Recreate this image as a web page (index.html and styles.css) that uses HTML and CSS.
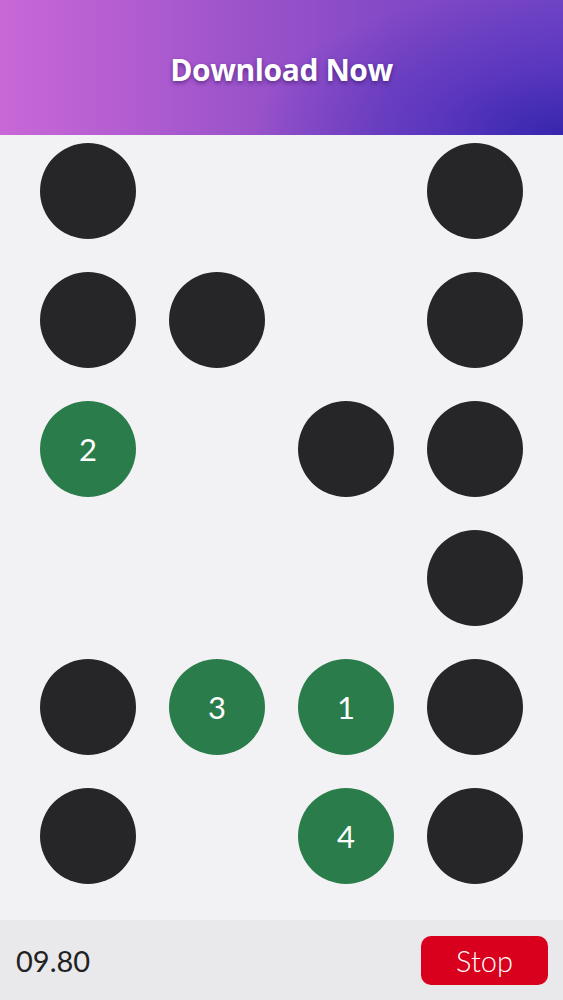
FILE: index.html
```html
<!doctype html>
<html>

<head>
    <meta charset="UTF-8">
    <title>Dots</title>
    <link rel="stylesheet" href="styles.css">
</head>

<body>
    <div class="banner">
        <h1>Download Now</h1>
    </div>
    <div class="board">
        <div class="dot"></div>
        <div class="cell"></div>
        <div class="cell"></div>
        <div class="dot"></div>

        <div class="dot"></div>
        <div class="dot"></div>
        <div class="cell"></div>
        <div class="dot"></div>

        <div class="dot hit">2</div>
        <div class="cell"></div>
        <div class="dot"></div>
        <div class="dot"></div>

        <div class="cell"></div>
        <div class="cell"></div>
        <div class="cell"></div>
        <div class="dot"></div>

        <div class="dot"></div>
        <div class="dot hit">3</div>
        <div class="dot hit">1</div>
        <div class="dot"></div>

        <div class="dot"></div>
        <div class="cell"></div>
        <div class="dot hit">4</div>
        <div class="dot"></div>
    </div>
    <div class="footer">
        <span class="timer">09.80</span>
        <button class="stop">Stop</button>
    </div>
</body>

</html>
```

FILE: styles.css
```css
* {
    margin: 0;
    padding: 0;
    box-sizing: border-box;
}

html,
body {
    width: 100%;
    height: 100%;
    overflow: hidden;
}

body {
    background-color: #f2f2f4;
    font-family: Lato, "Open Sans", sans-serif;
    display: flex;
    flex-direction: column;
}

.banner {
    height: 135px;
    padding-top: 3px;
    display: flex;
    align-items: center;
    justify-content: center;
    background:
        radial-gradient(ellipse 55% 110% at 100% 100%, #3626ad 0%, rgba(70, 45, 185, 0.6) 45%, rgba(110, 70, 200, 0) 100%),
        linear-gradient(90deg, #c967d7 0%, #b05cd0 25%, #9a52ca 45%, #8349c6 70%, #7445c6 100%);
}

.banner h1 {
    color: #fff;
    font: bold 30px "Open Sans", sans-serif;
    letter-spacing: -0.4px;
    text-shadow: 0 2px 4px rgba(40, 10, 80, 0.55);
}

.board {
    flex: 1;
    display: grid;
    grid-template-columns: repeat(4, 96px);
    grid-auto-rows: 96px;
    column-gap: 33px;
    row-gap: 33px;
    padding: 8px 40px 0;
}

.dot {
    width: 96px;
    height: 96px;
    border-radius: 50%;
    background-color: #262628;
    color: #fff;
    font-size: 31px;
    display: flex;
    align-items: center;
    justify-content: center;
}

.dot.hit {
    background-color: #2a7d4b;
}

.footer {
    height: 80px;
    background-color: #e9e9eb;
    display: flex;
    align-items: center;
    justify-content: space-between;
    padding: 0 15px 0 16px;
}

.timer {
    font-size: 29px;
    color: #222;
}

.stop {
    width: 127px;
    height: 49px;
    border: none;
    border-radius: 10px;
    background-color: #d8001c;
    color: #fff;
    font: 300 29px Lato, sans-serif;
}
```
